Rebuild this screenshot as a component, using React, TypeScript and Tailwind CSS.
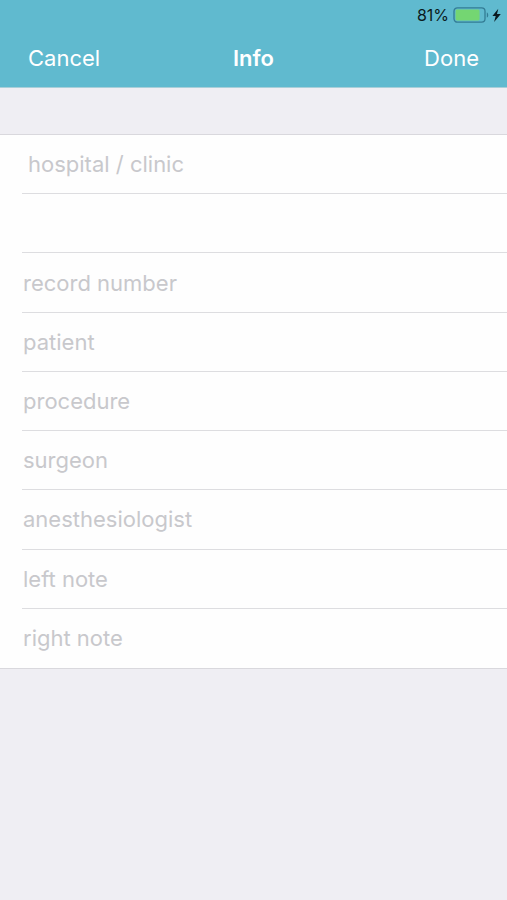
import { useState } from "react";
import clsx from "clsx";

type Field = {
  id: string;
  label: string;
};

const FIELDS: Field[] = [
  { id: "hospital", label: "hospital / clinic" },
  { id: "hospital2", label: "" },
  { id: "record", label: "record number" },
  { id: "patient", label: "patient" },
  { id: "procedure", label: "procedure" },
  { id: "surgeon", label: "surgeon" },
  { id: "anesthesiologist", label: "anesthesiologist" },
  { id: "left", label: "left note" },
  { id: "right", label: "right note" },
];

function Battery() {
  return (
    <svg width="50" height="18" viewBox="0 0 50 18" aria-hidden="true">
      <rect x="1" y="1.8" width="31" height="14.4" rx="3.4" fill="none" stroke="#337c94" strokeWidth="1.3" />
      <rect x="2.6" y="3.6" width="24" height="10.8" rx="1.4" fill="#74d672" />
      <path d="M33.8 6.4c1.9.6 1.9 4.6 0 5.2z" fill="#337c94" />
      <path d="M45.3 2.8 39.4 9.9h3.3l-1.6 6 6.7-7.9h-3.8z" fill="#0b1a20" />
    </svg>
  );
}

export default function App() {
  const [values, setValues] = useState<Record<string, string>>({});

  return (
    <div className="min-h-screen bg-[#efeef3] font-['Inter','Liberation_Sans',sans-serif]">
      <header className="border-b border-[#a9cfd9] bg-[#60bacf]">
        <div className="flex h-7 items-center justify-end gap-1 pr-1 pt-0.5">
          <span className="text-base leading-5 text-[#0b1a20]">81%</span>
          <Battery />
        </div>
        <nav className="grid h-[59px] grid-cols-3 items-center px-7 text-[22px] leading-7 text-white">
          <button type="button" className="justify-self-start">
            Cancel
          </button>
          <h1 className="text-center font-semibold">Info</h1>
          <button type="button" className="justify-self-end">
            Done
          </button>
        </nav>
      </header>

      <form
        className="mt-[46px] grid min-h-[535px] auto-rows-fr border-y border-[#d9d8dd] bg-[#fefefe]"
        onSubmit={(e) => e.preventDefault()}
      >
        {FIELDS.map((f, i) => {
          const value = values[f.id] ?? "";
          const indent = i === 0 ? "pl-1.5" : "pl-px";

          // label and input share one cell, the label is the prompt until something is typed
          return (
            <div
              key={f.id}
              className={clsx(
                "ml-[22px] grid text-[22px] leading-7",
                i < FIELDS.length - 1 && "border-b border-[#dddde0]"
              )}
            >
              {f.label && (
                <label
                  htmlFor={f.id}
                  className={clsx(
                    "col-start-1 row-start-1 self-center text-[#c8c8cc]",
                    indent,
                    value && "opacity-0"
                  )}
                >
                  {f.label}
                </label>
              )}
              <input
                id={f.id}
                type="text"
                aria-label={f.label ? undefined : "hospital / clinic, second line"}
                value={value}
                onChange={(e) => setValues({ ...values, [f.id]: e.target.value })}
                className={clsx(
                  "col-start-1 row-start-1 w-full min-w-0 bg-transparent pr-4 text-black outline-none",
                  indent
                )}
              />
            </div>
          );
        })}
      </form>
    </div>
  );
}
